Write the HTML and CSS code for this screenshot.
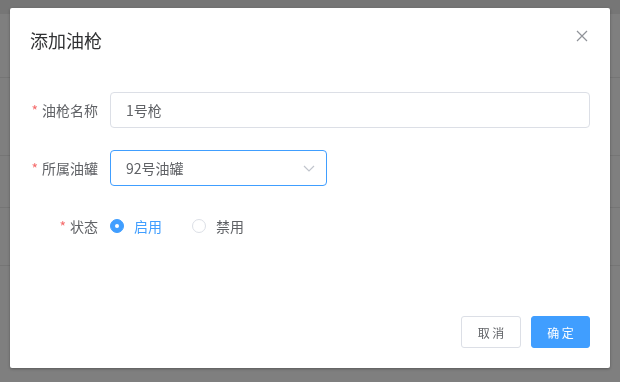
FILE: index.html
```html
<!DOCTYPE html>
<html lang="zh-CN">
<head>
  <meta charset="UTF-8">
  <meta name="viewport" content="width=device-width, initial-scale=1.0">
  <title>添加油枪</title>
  <link rel="stylesheet" href="styles.css">
</head>
<body>
  <!-- 背景列表页（被遮罩覆盖） -->
  <div class="page">
    <div class="page-head"></div>
    <div class="page-row r1"></div>
    <div class="page-row r2"></div>
    <div class="page-row r3"></div>
    <div class="page-row r4"></div>
  </div>

  <div class="dialog">
    <div class="dialog-header">
      <span class="dialog-title">添加油枪</span>
      <button class="dialog-close" aria-label="关闭">
        <svg width="12" height="12" viewBox="0 0 12 12"><path d="M1 1L11 11M11 1L1 11" stroke="#909399" stroke-width="1.2" fill="none"/></svg>
      </button>
    </div>

    <form class="dialog-body">
      <div class="form-item">
        <label class="form-label"><span class="req">*</span>油枪名称</label>
        <div class="form-content">
          <input class="input" type="text" value="1号枪">
        </div>
      </div>
      <div class="form-item">
        <label class="form-label"><span class="req">*</span>所属油罐</label>
        <div class="form-content">
          <div class="select">
            <span>92号油罐</span>
            <svg class="arrow" width="12" height="7" viewBox="0 0 12 7"><path d="M1 1L6 6L11 1" stroke="#c0c4cc" stroke-width="1.2" fill="none"/></svg>
          </div>
        </div>
      </div>
      <div class="form-item">
        <label class="form-label"><span class="req">*</span>状态</label>
        <div class="form-content radios">
          <label class="radio checked"><span class="radio-dot"></span><span class="radio-text">启用</span></label>
          <label class="radio"><span class="radio-dot"></span><span class="radio-text">禁用</span></label>
        </div>
      </div>
    </form>

    <div class="dialog-footer">
      <button class="btn">取 消</button>
      <button class="btn btn-primary">确 定</button>
    </div>
  </div>
</body>
</html>
```

FILE: styles.css
```css
* { box-sizing: border-box; margin: 0; padding: 0; }
body { font-family: "Noto Sans CJK SC", "Liberation Sans", sans-serif; background: #7f7f7f; color: #606266; font-size: 14px; }

.page { width: 100%; }
.page-head { height: 14px; background: #767676; }
.page-row { border-bottom: 1px solid #757575; }
.r1 { height: 64px; }
.r2 { height: 78px; }
.r3 { height: 52px; }
.r4 { height: 58px; }

.dialog { position: fixed; left: 10px; top: 8px; width: 600px; height: 360px; background: #fff; border-radius: 2px; box-shadow: 0 1px 3px rgba(0,0,0,0.3); display: flex; flex-direction: column; }
.dialog-header { padding: 20px 20px 10px; display: flex; justify-content: space-between; align-items: center; }
.dialog-title { font-size: 18px; line-height: 24px; color: #303133; }
.dialog-close { border: none; background: none; width: 16px; height: 16px; display: flex; align-items: center; justify-content: center; margin-top: -8px; cursor: pointer; }

.dialog-body { padding: 30px 20px; }
.form-item { display: flex; margin-bottom: 22px; }
.form-item:last-child { margin-bottom: 0; }
.form-label { width: 80px; padding-right: 12px; text-align: right; line-height: 36px; color: #606266; white-space: nowrap; }
.req { color: #f56c6c; margin-right: 4px; }
.form-content { flex: 1; display: flex; align-items: center; min-height: 36px; }

.input { width: 100%; height: 36px; border: 1px solid #dcdfe6; border-radius: 4px; padding: 0 15px; font: inherit; color: #606266; outline: none; }
.select { width: 217px; height: 36px; border: 1px solid #409eff; border-radius: 4px; padding: 0 15px; display: flex; align-items: center; justify-content: space-between; color: #606266; }
.select .arrow { margin-right: -4px; }

.radios { gap: 30px; }
.radio { display: flex; align-items: center; color: #606266; cursor: pointer; }
.radio-dot { width: 14px; height: 14px; border: 1px solid #dcdfe6; border-radius: 50%; background: #fff; display: flex; align-items: center; justify-content: center; }
.radio-text { padding-left: 10px; }
.radio.checked .radio-dot { background: #409eff; border-color: #409eff; }
.radio.checked .radio-dot::after { content: ""; width: 4px; height: 4px; border-radius: 50%; background: #fff; }
.radio.checked .radio-text { color: #409eff; }

.dialog-footer { margin-top: auto; padding: 10px 20px 20px; display: flex; justify-content: flex-end; gap: 10px; }
.btn { width: 60px; height: 32px; padding: 0; font: inherit; font-size: 12px; border: 1px solid #dcdfe6; border-radius: 3px; background: #fff; color: #606266; cursor: pointer; }
.btn-primary { width: 59px; background: #409eff; border-color: #409eff; color: #fff; }
```
